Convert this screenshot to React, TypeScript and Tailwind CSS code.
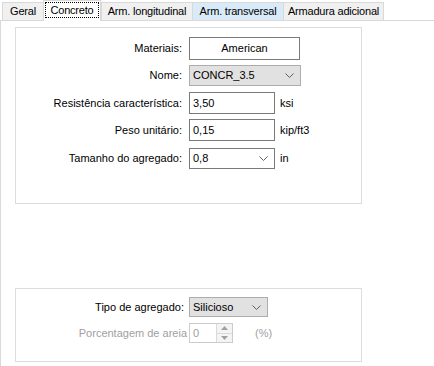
import React from 'react'

const TABS = [
  { name: 'Geral', w: 'w-[41px]' },
  { name: 'Concreto', w: 'w-[58px]', active: true },
  { name: 'Arm. longitudinal', w: 'w-[91px]' },
  { name: 'Arm. transversal', w: 'w-[91px]', hover: true },
  { name: 'Armadura adicional', w: 'w-[101px]', last: true },
]

function Chevron() {
  return (
    <svg width="9" height="5" viewBox="0 0 9 5" className="shrink-0">
      <polyline points="0.5,0.5 4.5,4.5 8.5,0.5" fill="none" stroke="#606060" strokeWidth="1" />
    </svg>
  )
}

function Row({ label, mt, children }: { label: string; mt: string; children: React.ReactNode }) {
  return (
    <div className={`flex items-center ${mt}`}>
      <div className="w-[166px] text-right shrink-0">{label}</div>
      <div className="ml-[7px] flex items-center">{children}</div>
    </div>
  )
}

export default function App() {
  return (
    <div className="w-[434px] h-[366px] overflow-hidden bg-white text-[11px] leading-none text-black font-['Liberation_Sans',Arial,sans-serif]">
      <div className="flex items-end h-[20px] pl-[2px] tracking-[-0.2px]">
        {TABS.map(t => (
          <div
            key={t.name}
            className={`${t.w} flex items-center justify-center border-t border-l border-[#d9d9d9] ${t.last ? 'border-r' : ''} ${
              t.active
                ? 'h-[21px] -mb-px bg-white relative z-10 border-r pb-[2px]'
                : t.hover
                ? 'h-[18px] bg-[#d9ebf9] border-[#c5dcef]'
                : 'h-[18px] bg-[#f0f0f0]'
            }`}
          >
            {t.active ? (
              <span className="border border-dotted border-black px-[4px] h-[16px] flex items-center">{t.name}</span>
            ) : (
              t.name
            )}
          </div>
        ))}
      </div>

      <div className="h-[346px] border-t border-l border-[#d9d9d9] pl-[14px] pt-[6px]">
        <div className="w-[347px] h-[177px] border border-[#dcdcdc] pt-[9px]">
          <Row label="Materiais:" mt="mt-0">
            <div className="w-[111px] h-[23px] border border-[#7a7a7a] bg-white flex items-center justify-center">American</div>
          </Row>
          <Row label="Nome:" mt="mt-[5px]">
            <div className="w-[112px] h-[21px] border border-[#adadad] bg-[#e1e1e1] flex items-center justify-between pl-[3px] pr-[6px]">
              <span>CONCR_3.5</span>
              <Chevron />
            </div>
          </Row>
          <Row label="Resistência característica:" mt="mt-[6px]">
            <div className="w-[86px] h-[22px] border border-[#7a7a7a] bg-white flex items-center pl-[3px]">3,50</div>
            <span className="ml-[5px]">ksi</span>
          </Row>
          <Row label="Peso unitário:" mt="mt-[5px]">
            <div className="w-[86px] h-[22px] border border-[#7a7a7a] bg-white flex items-center pl-[3px]">0,15</div>
            <span className="ml-[5px]">kip/ft3</span>
          </Row>
          <Row label="Tamanho do agregado:" mt="mt-[7px]">
            <div className="w-[86px] h-[21px] border border-[#7a7a7a] bg-white flex items-center justify-between pl-[3px] pr-[6px]">
              <span>0,8</span>
              <Chevron />
            </div>
            <span className="ml-[5px]">in</span>
          </Row>
        </div>

        <div className="w-[347px] h-[74px] border border-[#dcdcdc] mt-[84px] pt-[8px]">
          <div className="flex items-center">
            <div className="w-[168px] text-right shrink-0">Tipo de agregado:</div>
            <div className="ml-[5px] w-[79px] h-[20px] border border-[#adadad] bg-[#e1e1e1] flex items-center justify-between pl-[3px] pr-[6px]">
              <span>Silicioso</span>
              <Chevron />
            </div>
          </div>
          <div className="flex items-center mt-[6px] text-[#a0a0a0]">
            <div className="w-[171px] text-right shrink-0">Porcentagem de areia</div>
            <div className="ml-[2px] w-[44px] h-[20px] border border-[#cccccc] bg-white flex">
              <div className="flex-1 flex items-center pl-[3px]">0</div>
              <div className="w-[16px] flex flex-col border-l border-[#dadada]">
                <div className="flex-1 flex items-center justify-center bg-[#f4f4f4] border-b border-[#dadada]">
                  <svg width="7" height="4" viewBox="0 0 7 4"><polygon points="3.5,0 7,4 0,4" fill="#a0a0a0" /></svg>
                </div>
                <div className="flex-1 flex items-center justify-center bg-[#f4f4f4]">
                  <svg width="7" height="4" viewBox="0 0 7 4"><polygon points="0,0 7,0 3.5,4" fill="#a0a0a0" /></svg>
                </div>
              </div>
            </div>
            <span className="ml-[22px]">(%)</span>
          </div>
        </div>
      </div>
    </div>
  )
}
